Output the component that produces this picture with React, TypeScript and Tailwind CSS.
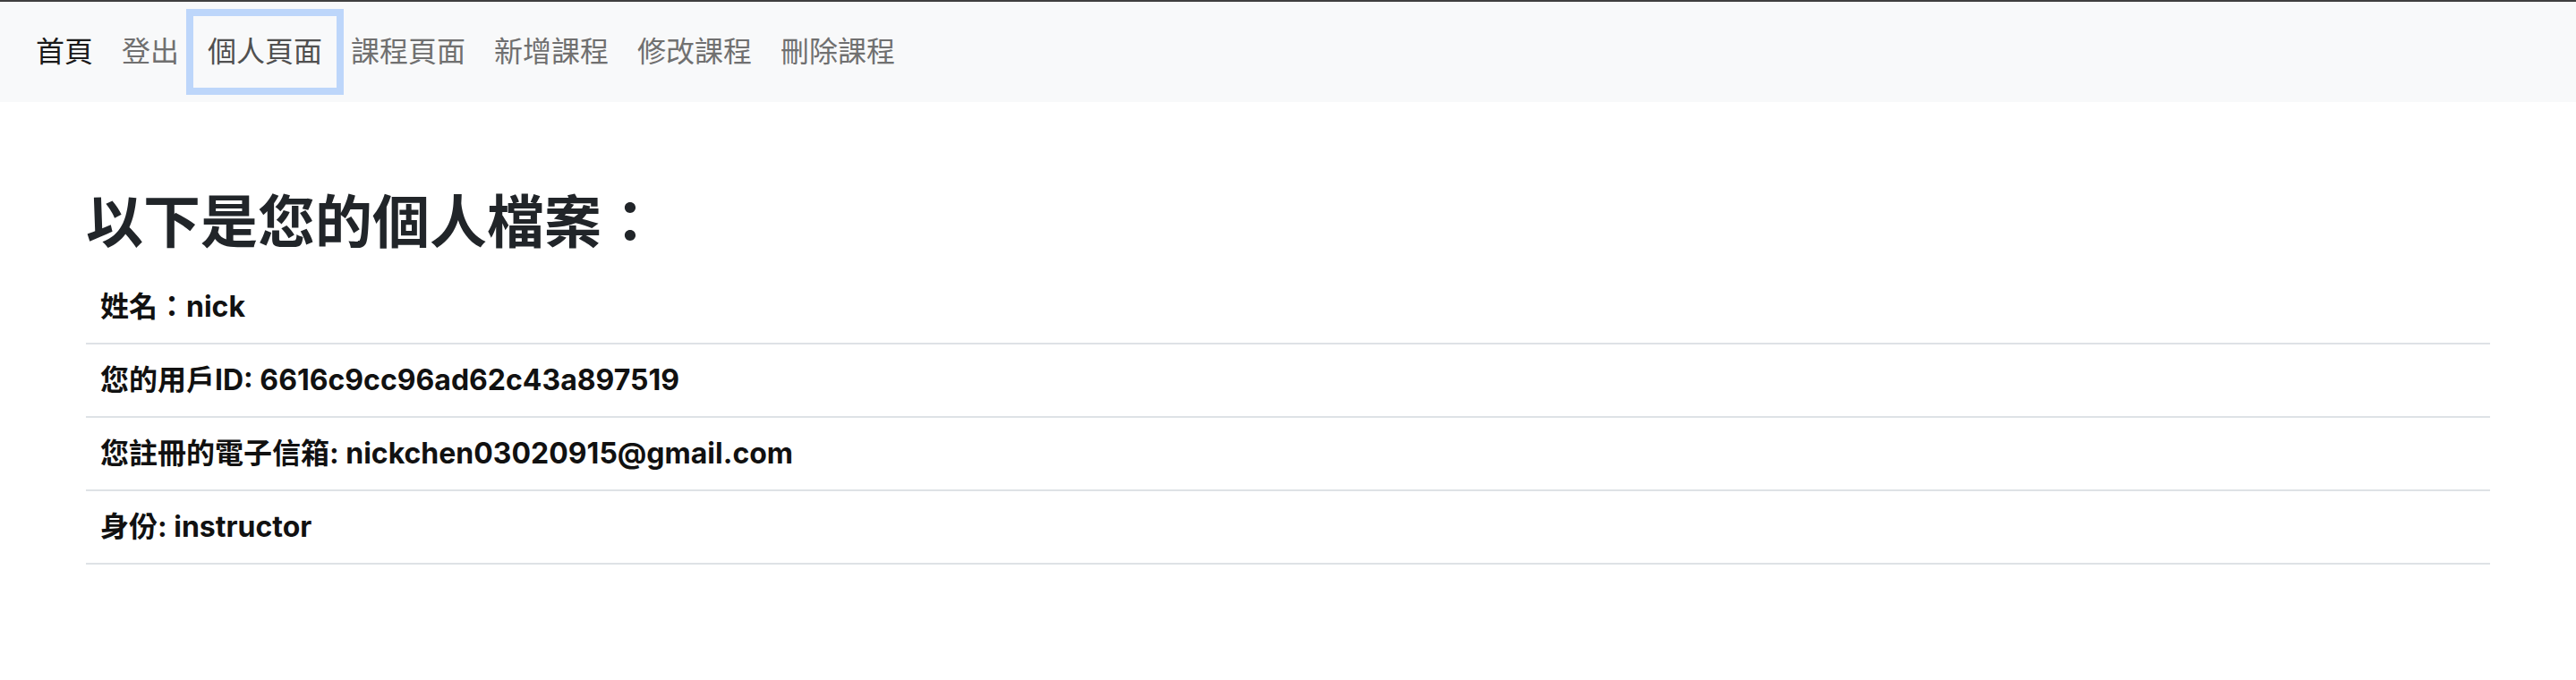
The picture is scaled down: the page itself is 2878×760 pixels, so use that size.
import React from "react";

const font = "font-['Inter','Noto_Sans_CJK_TC',sans-serif]";

export default function App() {
  const links = [
    { label: "首頁", cls: "text-[#1a1a1a]" },
    { label: "登出", cls: "text-[#707070]" },
    { label: "個人頁面", cls: "text-[#505050] shadow-[0_0_0_8px_rgba(13,110,253,0.25)]" },
    { label: "課程頁面", cls: "text-[#707070]" },
    { label: "新增課程", cls: "text-[#707070]" },
    { label: "修改課程", cls: "text-[#707070]" },
    { label: "刪除課程", cls: "text-[#707070]" },
  ];
  const rows = [
    "姓名：nick",
    "您的用戶ID: 6616c9cc96ad62c43a897519",
    "您註冊的電子信箱: nickchen03020915@gmail.com",
    "身份: instructor",
  ];
  return (
    <div className={`h-[760px] overflow-hidden bg-white ${font}`}>
      <nav className="border-t-2 border-[#3f3f3f] bg-[#f8f9fa] px-6 py-4">
        <div className="flex items-center">
          {links.map((l) => (
            <a
              key={l.label}
              className={`block px-4 py-4 text-[32px] leading-[48px] font-normal ${l.cls}`}
            >
              {l.label}
            </a>
          ))}
        </div>
      </nav>
      <main className="p-24">
        <h2 className="mb-4 text-[64px] leading-[1.2] font-bold text-[#212529]">
          以下是您的個人檔案：
        </h2>
        <div className="flex w-full flex-col">
          {rows.map((r) => (
            <div
              key={r}
              className="border-b-2 border-[#dee2e6] px-4 py-4 text-[32px] leading-[48px] font-bold text-[#111111]"
            >
              {r}
            </div>
          ))}
        </div>
      </main>
    </div>
  );
}
